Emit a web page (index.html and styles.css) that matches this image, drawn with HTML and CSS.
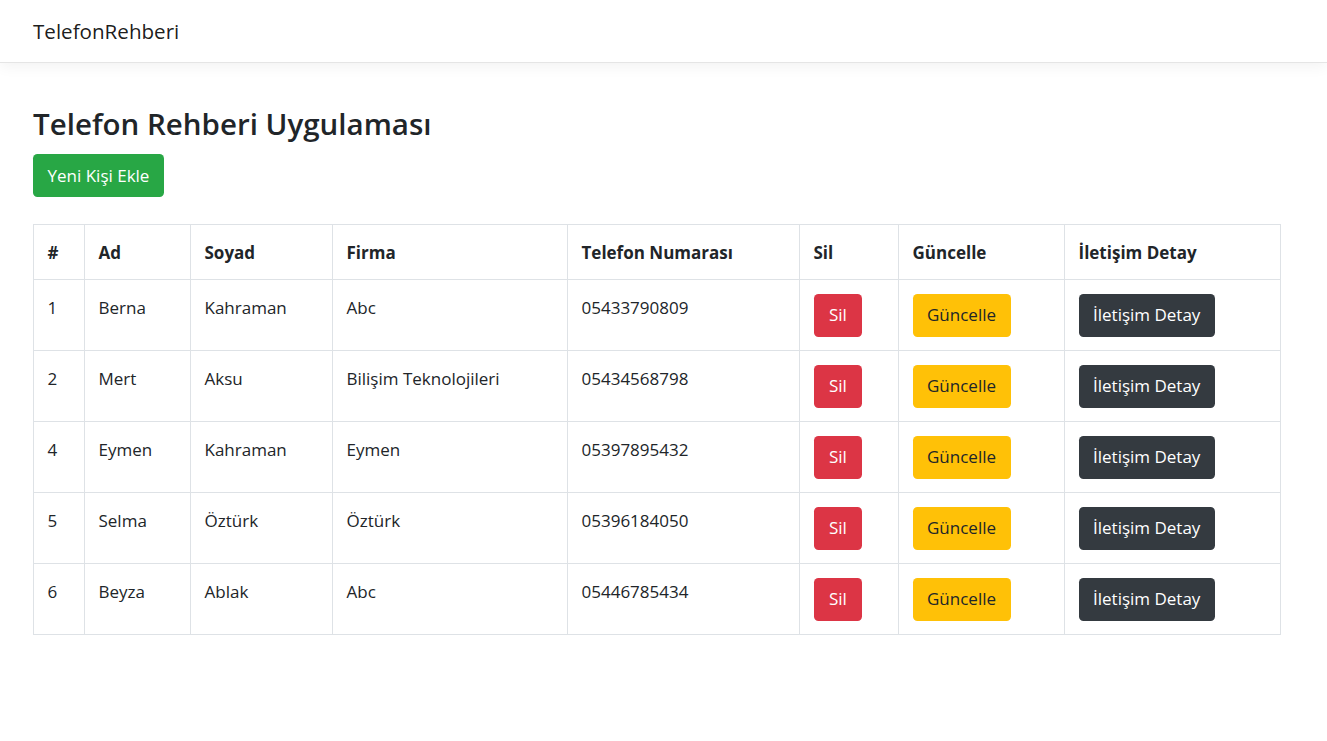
FILE: index.html
```html
<!DOCTYPE html>
<html lang="tr">
<head>
<meta charset="utf-8">
<title>TelefonRehberi</title>
<link rel="stylesheet" href="styles.css">
</head>
<body>
<header class="navbar">
  <a class="brand" href="#">TelefonRehberi</a>
</header>
<main class="container">
  <h2 class="title">Telefon Rehberi Uygulaması</h2>
  <div class="actions"><a class="btn btn-success" href="#">Yeni Kişi Ekle</a></div>
  <table class="table">
    <colgroup>
      <col class="c1"><col class="c2"><col class="c3"><col class="c4"><col class="c5"><col class="c6"><col class="c7"><col class="c8">
    </colgroup>
    <thead>
      <tr><th>#</th><th>Ad</th><th>Soyad</th><th>Firma</th><th>Telefon Numarası</th><th>Sil</th><th>Güncelle</th><th>İletişim Detay</th></tr>
    </thead>
    <tbody>
      <tr><td>1</td><td>Berna</td><td>Kahraman</td><td>Abc</td><td>05433790809</td><td><a class="btn btn-danger" href="#">Sil</a></td><td><a class="btn btn-warning" href="#">Güncelle</a></td><td><a class="btn btn-dark" href="#">İletişim Detay</a></td></tr>
      <tr><td>2</td><td>Mert</td><td>Aksu</td><td>Bilişim Teknolojileri</td><td>05434568798</td><td><a class="btn btn-danger" href="#">Sil</a></td><td><a class="btn btn-warning" href="#">Güncelle</a></td><td><a class="btn btn-dark" href="#">İletişim Detay</a></td></tr>
      <tr><td>4</td><td>Eymen</td><td>Kahraman</td><td>Eymen</td><td>05397895432</td><td><a class="btn btn-danger" href="#">Sil</a></td><td><a class="btn btn-warning" href="#">Güncelle</a></td><td><a class="btn btn-dark" href="#">İletişim Detay</a></td></tr>
      <tr><td>5</td><td>Selma</td><td>Öztürk</td><td>Öztürk</td><td>05396184050</td><td><a class="btn btn-danger" href="#">Sil</a></td><td><a class="btn btn-warning" href="#">Güncelle</a></td><td><a class="btn btn-dark" href="#">İletişim Detay</a></td></tr>
      <tr><td>6</td><td>Beyza</td><td>Ablak</td><td>Abc</td><td>05446785434</td><td><a class="btn btn-danger" href="#">Sil</a></td><td><a class="btn btn-warning" href="#">Güncelle</a></td><td><a class="btn btn-dark" href="#">İletişim Detay</a></td></tr>
    </tbody>
  </table>
</main>
</body>
</html>
```
FILE: styles.css
```css
* { box-sizing: border-box; }
html, body { margin: 0; padding: 0; }
body {
  font-family: "Open Sans", "Noto Sans", sans-serif;
  font-size: 17px;
  line-height: 27px;
  color: #212529;
  background: #fff;
}
.navbar {
  height: 63px;
  display: flex;
  align-items: center;
  padding: 0 33px;
  background: #fff;
  border-bottom: 1px solid #e5e5e5;
  box-shadow: 0 4px 13px rgba(0,0,0,0.05);
}
.brand {
  font-size: 20.6px;
  color: rgba(0,0,0,0.9);
  text-decoration: none;
  line-height: 30px;
}
.container {
  padding: 39px 47px 0 33px;
}
.title {
  margin: 0 0 9px;
  font-size: 29.5px;
  font-weight: 600;
  line-height: 43px;
}
.actions { margin-bottom: 27px; }
.btn {
  display: inline-block;
  height: 43px;
  padding: 7.5px 14.5px;
  font-size: 17px;
  line-height: 27px;
  border-radius: 4.5px;
  text-decoration: none;
  color: #fff;
  vertical-align: middle;
}
.btn-danger { padding: 7.5px 15.5px; }
.btn-success { background: #28a745; }
.btn-danger { background: #dc3545; }
.btn-warning { background: #ffc107; color: #212529; }
.btn-dark { background: #343a40; }
.table {
  width: 1247px;
  table-layout: fixed;
  border-collapse: collapse;
  border: 1px solid #dee2e6;
}
.c1 { width: 51px; } .c2 { width: 106px; } .c3 { width: 142px; } .c4 { width: 235px; }
.c5 { width: 232px; } .c6 { width: 99px; } .c7 { width: 166px; } .c8 { width: 216px; }
.table th, .table td {
  border: 1px solid #dee2e6;
  padding: 13.5px 13.5px;
  text-align: left;
  vertical-align: top;
  white-space: nowrap;
}
.table th { font-weight: 700; height: 55px; }
.table td { height: 71px; }
```
